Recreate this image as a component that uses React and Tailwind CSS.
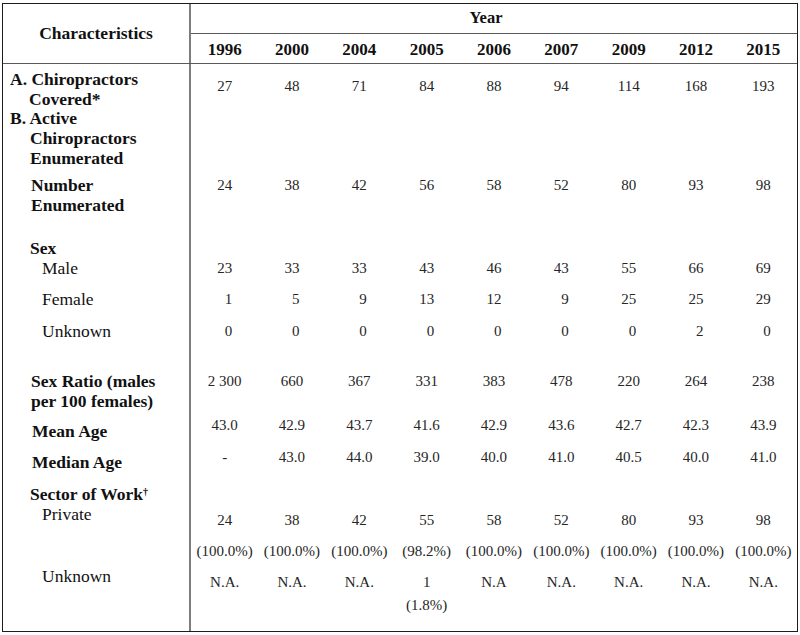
import React from 'react';

const years = ['1996', '2000', '2004', '2005', '2006', '2007', '2009', '2012', '2015'];

// pad single digits so they line up with the two-digit figures above
const pad = (v) => (
  <>
    <span className="invisible">0</span>
    {v}
  </>
);

const Row = ({ h, lpt, dpt, label, cells }) => (
  <div className={`grid grid-cols-[188px_repeat(9,minmax(0,1fr))] ${h}`}>
    <div className={`border-r-2 border-[#7d7d7d] whitespace-nowrap ${lpt}`}>{label}</div>
    {cells.map((c, i) => (
      <div key={i} className={`text-center text-[15px] leading-[20px] text-[#262626] ${dpt}`}>
        {c}
      </div>
    ))}
  </div>
);

const empty = Array(9).fill('');

export default function App() {
  return (
    <div className="w-[800px] h-[635px] bg-white font-['Liberation_Serif','Times_New_Roman',serif] text-[#111]">
      <div className="ml-[2px] pt-[3px]">
        <div className="w-[796px] h-[629px] border border-[#1c1c1c] flex flex-col">
          {/* header */}
          <div className="flex h-[60px] border-b border-[#5a5a5a]">
            <div className="w-[188px] border-r-2 border-[#7d7d7d] flex items-center justify-center font-bold text-[17.5px]">
              Characteristics
            </div>
            <div className="flex-1 flex flex-col">
              <div className="h-[30px] border-b border-[#5a5a5a] flex items-center justify-center pr-[16px] font-bold text-[16.5px]">
                Year
              </div>
              <div className="flex-1 grid grid-cols-9 items-center pt-[2px]">
                {years.map((y) => (
                  <div key={y} className="text-center font-bold text-[17px]">{y}</div>
                ))}
              </div>
            </div>
          </div>

          {/* body */}
          <div className="flex-1 flex flex-col text-[17.5px] leading-[20px]">
            <Row
              h="h-[44px]"
              lpt="pt-[5px] font-bold"
              dpt="pt-[12px]"
              label={
                <>
                  <div className="pl-[7px]">A. Chiropractors</div>
                  <div className="pl-[26px]">Covered*</div>
                </>
              }
              cells={['27', '48', '71', '84', '88', '94', '114', '168', '193']}
            />
            <Row
              h="h-[60px]"
              lpt="font-bold"
              dpt=""
              label={
                <>
                  <div className="pl-[7px]">B. Active</div>
                  <div className="pl-[27px]">Chiropractors</div>
                  <div className="pl-[27px]">Enumerated</div>
                </>
              }
              cells={empty}
            />
            <Row
              h="h-[46px]"
              lpt="pt-[7px] font-bold"
              dpt="pt-[7px]"
              label={
                <>
                  <div className="pl-[28px]">Number</div>
                  <div className="pl-[28px]">Enumerated</div>
                </>
              }
              cells={['24', '38', '42', '56', '58', '52', '80', '93', '98']}
            />
            <Row
              h="h-[44px]"
              lpt="pt-[24px] font-bold pl-[27px]"
              dpt=""
              label="Sex"
              cells={empty}
            />
            <Row
              h="h-[20px]"
              lpt="pl-[39px]"
              dpt=""
              label="Male"
              cells={['23', '33', '33', '43', '46', '43', '55', '66', '69']}
            />
            <Row
              h="h-[31px]"
              lpt="pt-[11px] pl-[39px]"
              dpt="pt-[11px]"
              label="Female"
              cells={[pad('1'), pad('5'), pad('9'), '13', '12', pad('9'), '25', '25', '29']}
            />
            <Row
              h="h-[32px]"
              lpt="pt-[12px] pl-[39px]"
              dpt="pt-[12px]"
              label="Unknown"
              cells={[pad('0'), pad('0'), pad('0'), pad('0'), pad('0'), pad('0'), pad('0'), pad('2'), pad('0')]}
            />
            <Row
              h="h-[69px]"
              lpt="pt-[30px] font-bold pl-[28px]"
              dpt="pt-[30px]"
              label={
                <>
                  <div>Sex Ratio (males</div>
                  <div>per 100 females)</div>
                </>
              }
              cells={['2 300', '660', '367', '331', '383', '478', '220', '264', '238']}
            />
            <Row
              h="h-[31px]"
              lpt="pt-[11px] font-bold pl-[29px]"
              dpt="pt-[5px]"
              label="Mean Age"
              cells={['43.0', '42.9', '43.7', '41.6', '42.9', '43.6', '42.7', '42.3', '43.9']}
            />
            <Row
              h="h-[31px]"
              lpt="pt-[11px] font-bold pl-[29px]"
              dpt="pt-[6px]"
              label="Median Age"
              cells={['-', '43.0', '44.0', '39.0', '40.0', '41.0', '40.5', '40.0', '41.0']}
            />
            <Row
              h="h-[32px]"
              lpt="pt-[12px] font-bold pl-[27px]"
              dpt=""
              label={
                <>
                  Sector of Work<sup className="text-[10px]">†</sup>
                </>
              }
              cells={empty}
            />
            <Row
              h="h-[57px]"
              lpt="pl-[39px]"
              dpt="pt-[6px]"
              label="Private"
              cells={['24', '38', '42', '55', '58', '52', '80', '93', '98'].map((v, i) => (
                <>
                  <div>{v}</div>
                  <div className="mt-[11px] whitespace-nowrap">{i === 3 ? '(98.2%)' : '(100.0%)'}</div>
                </>
              ))}
            />
            <Row
              h="flex-1"
              lpt="pt-[5px] pl-[39px]"
              dpt="pt-[11px]"
              label="Unknown"
              cells={['N.A.', 'N.A.', 'N.A.', '1', 'N.A', 'N.A.', 'N.A.', 'N.A.', 'N.A.'].map((v, i) => (
                <>
                  <div>{v}</div>
                  {i === 3 && <div className="mt-[3px]">(1.8%)</div>}
                </>
              ))}
            />
          </div>
        </div>
      </div>
    </div>
  );
}
